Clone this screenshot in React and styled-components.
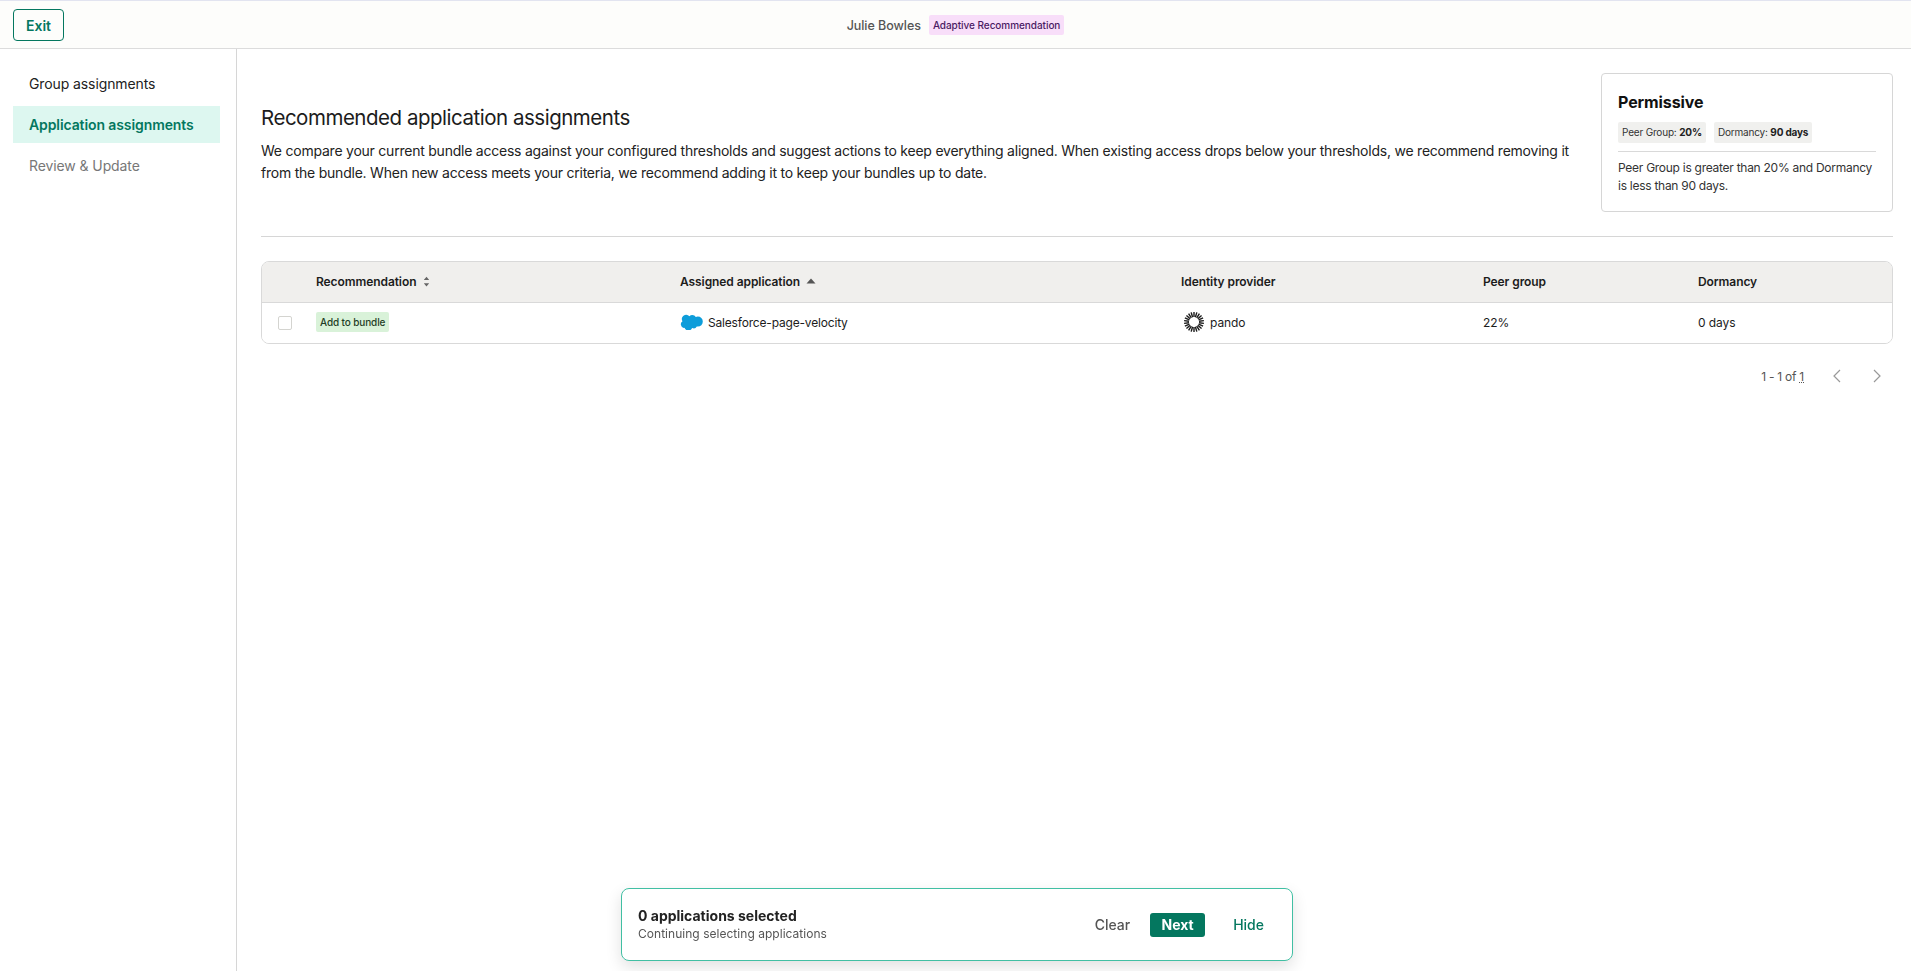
import React from "react";
import styled, { createGlobalStyle } from "styled-components";

const Global = createGlobalStyle`
  html, body { margin: 0; padding: 0; background: #fff; }
  body { font-family: Inter, "Noto Sans", sans-serif; color: #1c1c1c; }
  * { box-sizing: border-box; }
`;

const Page = styled("div")`
  height: 971px;
  display: flex;
  flex-direction: column;
  overflow: hidden;
`;
const Header = styled("header")`
  flex: none;
  display: flex;
  align-items: center;
  justify-content: center;
  position: relative;
  height: 49px;
  padding-top: 1px;
  background: #fdfdfb;
  border-top: 1px solid #e2e4f0;
  border-bottom: 1px solid #dcdcdc;
  gap: 8px;
`;
const ExitBtn = styled("button")`
  position: absolute;
  left: 13px;
  top: 8px;
  width: 51px;
  height: 32px;
  border: 1px solid #04775f;
  border-radius: 4px;
  background: transparent;
  color: #04775f;
  font: 600 14px Inter, sans-serif;
`;
const UserName = styled("span")`
  font-size: 12.5px;
  font-weight: 500;
  color: #555;
  letter-spacing: -0.05px;
`;
const ModeTag = styled("span")`
  background: #f8def9;
  color: #4b1a63;
  font-size: 10px;
  font-weight: 500;
  letter-spacing: -0.05px;
  border-radius: 2px;
  padding: 4px;
`;
const Body = styled("div")`
  flex: 1;
  display: flex;
  min-height: 0;
`;
const Sidebar = styled("nav")`
  width: 237px;
  flex: none;
  border-right: 1px solid #d6d6d6;
  padding: 16px 16px 0 13px;
  display: flex;
  flex-direction: column;
  gap: 4px;
`;
const NavItem = styled("div")`
  height: 37px;
  display: flex;
  align-items: center;
  padding-left: 16px;
  font-size: 14px;
  letter-spacing: -0.1px;
  font-weight: ${(p) => (p.$active ? 600 : 400)};
  color: ${(p) => (p.$active ? "#04775f" : p.$muted ? "#777" : "#222")};
  background: ${(p) => (p.$active ? "#ddf7f0" : "transparent")};
`;
const Main = styled("main")`
  flex: 1;
  min-width: 0;
  padding: 24px 18px 0 24px;
`;
const Intro = styled("section")`
  display: flex;
  justify-content: space-between;
  padding-bottom: 24px;
  border-bottom: 1px solid #d6d6d6;
`;
const IntroText = styled("div")`
  width: 1312px;
  padding-top: 32px;
`;
const Title = styled("h1")`
  margin: 0 0 9px;
  font-size: 20.5px;
  line-height: 26px;
  font-weight: 400;
  letter-spacing: -0.48px;
  color: #1c1c1c;
`;
const Lead = styled("p")`
  margin: 0;
  font-size: 14px;
  line-height: 22px;
  letter-spacing: -0.23px;
  color: #222;
`;
const PolicyCard = styled("aside")`
  width: 292px;
  height: 139px;
  border: 1px solid #d6d6d6;
  border-radius: 4px;
  padding: 18px 16px;
`;
const PolicyName = styled("div")`
  font-size: 16px;
  font-weight: 700;
  line-height: 20px;
  letter-spacing: -0.1px;
  color: #111;
`;
const ChipRow = styled("div")`
  display: flex;
  gap: 8px;
  margin-top: 10px;
  padding-bottom: 8px;
  border-bottom: 1px solid #d9d9d9;
`;
const Chip = styled("span")`
  background: #f0f0ee;
  border-radius: 2px;
  padding: 3px 4px;
  font-size: 10px;
  line-height: 15px;
  letter-spacing: -0.18px;
  color: #333;
  b { font-weight: 700; color: #222; }
`;
const PolicyNote = styled("p")`
  margin: 7px 0 0;
  font-size: 12px;
  line-height: 18px;
  letter-spacing: -0.27px;
  color: #333;
`;
const Table = styled("div")`
  margin-top: 24px;
  border: 1px solid #d9d9d9;
  border-radius: 8px;
  overflow: hidden;
`;
const Row = styled("div")`
  display: grid;
  grid-template-columns: 54px 364px 501px 302px 215px 1fr;
  align-items: center;
  height: ${(p) => (p.$head ? "41px" : "40px")};
  padding-bottom: 2px;
  background: ${(p) => (p.$head ? "#f0efed" : "#fff")};
  border-bottom: ${(p) => (p.$head ? "1px solid #d9d9d9" : "none")};
  font-size: 12px;
  font-weight: ${(p) => (p.$head ? 600 : 400)};
  letter-spacing: -0.08px;
  color: #1c1c1c;
`;
const Cell = styled("div")`
  display: flex;
  align-items: center;
  gap: ${(p) => p.$gap || 0}px;
`;
const Check = styled("span")`
  width: 14px;
  height: 14px;
  margin-left: 16px;
  margin-top: 2px;
  border: 1.5px solid #d4d4d0;
  border-radius: 2px;
  background: #fff;
`;
const ActionTag = styled("span")`
  background: #d9f2d9;
  color: #1f3d26;
  border-radius: 2px;
  font-size: 10px;
  font-weight: 500;
  letter-spacing: -0.12px;
  padding: 4px;
  line-height: 12px;
`;
const AppName = styled("span")`
  letter-spacing: -0.18px;
`;
const Pager = styled("div")`
  display: flex;
  align-items: center;
  justify-content: flex-end;
  height: 24px;
  margin-top: 20px;
  padding-right: 4px;
  gap: 16px;
  font-size: 12px;
  letter-spacing: -0.25px;
  color: #555;
  u { text-decoration-style: dotted; }
`;
const PagerCount = styled("span")`
  margin-right: 5px;
`;
const SelectionBar = styled("div")`
  position: fixed;
  left: 621px;
  top: 888px;
  width: 672px;
  height: 73px;
  display: flex;
  align-items: center;
  padding: 0 28px 0 16px;
  background: #fff;
  border: 1px solid #41bfa3;
  border-radius: 8px;
  box-shadow: 0 6px 16px rgba(0, 0, 0, 0.12);
`;
const SelectionText = styled("div")`
  flex: 1;
`;
const SelectionCount = styled("div")`
  font-size: 14px;
  font-weight: 700;
  line-height: 18px;
  color: #222;
`;
const SelectionHint = styled("div")`
  font-size: 12px;
  line-height: 17px;
  letter-spacing: 0.03px;
  color: #555;
`;
const BarButton = styled("button")`
  border: none;
  background: ${(p) => (p.$primary ? "#04775f" : "transparent")};
  color: ${(p) => (p.$primary ? "#fff" : p.$accent ? "#04775f" : "#555")};
  font: ${(p) => (p.$primary ? 700 : 500)} 14px Inter, sans-serif;
  height: 24px;
  width: ${(p) => (p.$primary ? "55px" : "auto")};
  padding: 0;
  border-radius: 3px;
  margin-left: ${(p) => p.$left || 0}px;
`;

const SortBoth = () => (
  <svg width="9" height="13" viewBox="0 0 8 12" fill="#666">
    <path d="M4 1.500 6.500 4.500h-5zM4 10.500 1.500 7.500h5z" />
  </svg>
);
const SortUp = () => (
  <svg width="10" height="6" viewBox="0 0 10 6" fill="#555">
    <path d="M5 .5 9.500 5.500h-9z" />
  </svg>
);
const Cloud = () => (
  <svg width="23" height="16" viewBox="0 0 23 16" fill="#0d9dda">
    <path d="M9.400 2.300A4 4 0 0 1 12.300 1a4 4 0 0 1 3.500 2 4.800 4.800 0 0 1 2-.4 5 5 0 0 1 0 10 4.800 4.800 0 0 1-1-.1 3.600 3.600 0 0 1-4.700 1.500 4.100 4.100 0 0 1-7.600-.2 3.200 3.200 0 0 1-.7.1A3.700 3.700 0 0 1 2.500 7.200 4.200 4.200 0 0 1 4.800.9a4.200 4.200 0 0 1 4.600 1.400z" />
  </svg>
);
const Burst = styled("svg")`
  margin-left: 2px;
`;
const Sunburst = () => (
  <Burst width="22" height="22" viewBox="0 0 22 22" stroke="#1a1a1a" strokeWidth="1.400">
    {Array.from({ length: 22 }, (_, i) => (
      <line key={i} x1="11" y1="1" x2="11" y2="6" transform={`rotate(${(i * 360) / 22} 11 11)`} />
    ))}
  </Burst>
);
const Chevron = ({ d }) => (
  <svg width="24" height="24" viewBox="0 0 24 24" fill="none" stroke="#999" strokeWidth="1.200">
    <path d={d} />
  </svg>
);

export default function App() {
  return (
    <Page>
      <Global />
      <Header>
        <ExitBtn>Exit</ExitBtn>
        <UserName>Julie Bowles</UserName>
        <ModeTag>Adaptive Recommendation</ModeTag>
      </Header>
      <Body>
        <Sidebar>
          <NavItem>Group assignments</NavItem>
          <NavItem $active>Application assignments</NavItem>
          <NavItem $muted>Review &amp; Update</NavItem>
        </Sidebar>
        <Main>
          <Intro>
            <IntroText>
              <Title>Recommended application assignments</Title>
              <Lead>
                We compare your current bundle access against your configured thresholds and suggest actions to keep everything aligned. When existing access drops below your thresholds, we recommend removing it from the bundle. When new access meets your criteria, we recommend adding it to keep your bundles up to date.
              </Lead>
            </IntroText>
            <PolicyCard>
              <PolicyName>Permissive</PolicyName>
              <ChipRow>
                <Chip>Peer Group: <b>20%</b></Chip>
                <Chip>Dormancy: <b>90 days</b></Chip>
              </ChipRow>
              <PolicyNote>Peer Group is greater than 20% and Dormancy is less than 90 days.</PolicyNote>
            </PolicyCard>
          </Intro>
          <Table>
            <Row $head>
              <Cell />
              <Cell $gap={6}>Recommendation <SortBoth /></Cell>
              <Cell $gap={6}>Assigned application <SortUp /></Cell>
              <Cell>Identity provider</Cell>
              <Cell>Peer group</Cell>
              <Cell>Dormancy</Cell>
            </Row>
            <Row>
              <Cell><Check /></Cell>
              <Cell><ActionTag>Add to bundle</ActionTag></Cell>
              <Cell $gap={5}><Cloud /><AppName>Salesforce-page-velocity</AppName></Cell>
              <Cell $gap={5}><Sunburst />pando</Cell>
              <Cell>22%</Cell>
              <Cell>0 days</Cell>
            </Row>
          </Table>
          <Pager>
            <PagerCount>1 - 1 of <u>1</u></PagerCount>
            <Chevron d="M15 6 9 12l6 6" />
            <Chevron d="m9 6 6 6-6 6" />
          </Pager>
        </Main>
      </Body>
      <SelectionBar>
        <SelectionText>
          <SelectionCount>0 applications selected</SelectionCount>
          <SelectionHint>Continuing selecting applications</SelectionHint>
        </SelectionText>
        <BarButton>Clear</BarButton>
        <BarButton $primary $left={20}>Next</BarButton>
        <BarButton $accent $left={28}>Hide</BarButton>
      </SelectionBar>
    </Page>
  );
}
